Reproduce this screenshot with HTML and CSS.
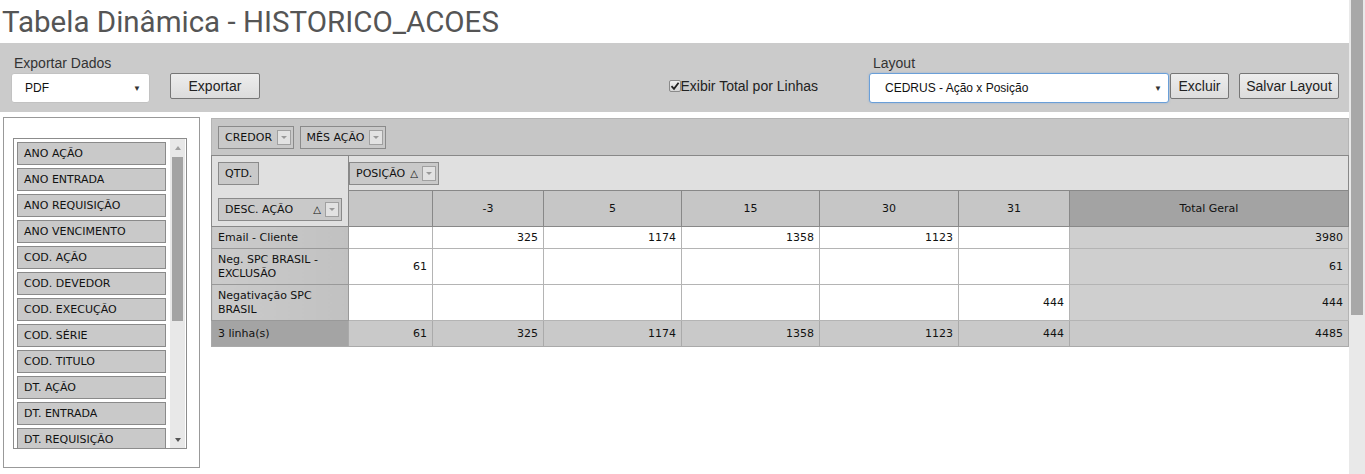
FILE: index.html
```html
<!DOCTYPE html>
<html lang="pt-BR">
<head>
    <meta charset="UTF-8">
    <meta name="viewport" content="width=device-width, initial-scale=1.0">
    <title>Tabela Dinâmica - HISTORICO_ACOES</title>
    <link rel="stylesheet" href="styles.css">
</head>
<body>
<div class="screen">
    <div class="page">
        <h1 class="title">Tabela Dinâmica - HISTORICO_ACOES</h1>

        <!-- Barra de exportação / layout -->
        <div class="toolbar">
            <div class="field">
                <span class="field-label">Exportar Dados</span>
                <div class="select select-export"><span>PDF</span><span class="caret">&#9660;</span></div>
            </div>
            <button class="btn btn-export">Exportar</button>

            <label class="check">
                <span class="check-box">
                    <svg width="10" height="10" viewBox="0 0 10 10"><path d="M1.5 5.2 L4 7.8 L8.6 1.8" fill="none" stroke="#222" stroke-width="1.8"/></svg>
                </span>Exibir Total por Linhas
            </label>
            <div class="field field-layout">
                <span class="field-label">Layout</span>
                <div class="select select-layout"><span>CEDRUS - Ação x Posição</span><span class="caret">&#9660;</span></div>
            </div>
            <button class="btn btn-delete">Excluir</button>
            <button class="btn btn-save">Salvar Layout</button>
        </div>

        <div class="content">
            <!-- Lista de campos disponíveis -->
            <div class="fields-panel">
                <div class="field-list">
                    <div class="items">
                        <div class="item">ANO AÇÃO</div>
                        <div class="item">ANO ENTRADA</div>
                        <div class="item">ANO REQUISIÇÃO</div>
                        <div class="item">ANO VENCIMENTO</div>
                        <div class="item">COD. AÇÃO</div>
                        <div class="item">COD. DEVEDOR</div>
                        <div class="item">COD. EXECUÇÃO</div>
                        <div class="item">COD. SÉRIE</div>
                        <div class="item">COD. TITULO</div>
                        <div class="item">DT. AÇÃO</div>
                        <div class="item">DT. ENTRADA</div>
                        <div class="item">DT. REQUISIÇÃO</div>
                    </div>
                    <div class="mini-scroll">
                        <span class="mini-arrow up"></span>
                        <div class="mini-track"><div class="mini-thumb"></div></div>
                        <span class="mini-arrow down"></span>
                    </div>
                </div>
            </div>

            <!-- Tabela dinâmica -->
            <div class="pivot-wrap">
                <table class="pivot">
                    <colgroup>
                        <col class="c-row">
                        <col class="c-84">
                        <col class="c-111">
                        <col class="c-138">
                        <col class="c-138">
                        <col class="c-139">
                        <col class="c-111">
                        <col>
                    </colgroup>
                    <tr class="filter-row">
                        <td colspan="8" class="filter-cell">
                            <span class="pfield">CREDOR<span class="drop"></span></span>
                            <span class="pfield">MÊS AÇÃO<span class="drop"></span></span>
                        </td>
                    </tr>
                    <tr class="col-field-row">
                        <td rowspan="2" class="corner">
                            <div class="corner-inner">
                                <span class="pfield pfield-plain">QTD.</span>
                                <span class="pfield pfield-wide">DESC. AÇÃO<span class="icons"><span class="sort">&#9651;</span><span class="drop"></span></span></span>
                            </div>
                        </td>
                        <td colspan="7" class="col-field-cell">
                            <span class="pfield">POSIÇÃO<span class="icons"><span class="sort">&#9651;</span><span class="drop"></span></span></span>
                        </td>
                    </tr>
                    <tr class="head-row">
                        <td class="colhead"></td>
                        <td class="colhead">-3</td>
                        <td class="colhead">5</td>
                        <td class="colhead">15</td>
                        <td class="colhead">30</td>
                        <td class="colhead">31</td>
                        <td class="colhead grand">Total Geral</td>
                    </tr>
                    <tr class="row-short">
                        <td class="rowhead">Email - Cliente</td>
                        <td class="num"></td>
                        <td class="num">325</td>
                        <td class="num">1174</td>
                        <td class="num">1358</td>
                        <td class="num">1123</td>
                        <td class="num"></td>
                        <td class="num total">3980</td>
                    </tr>
                    <tr class="row-tall">
                        <td class="rowhead">Neg. SPC BRASIL - EXCLUSÃO</td>
                        <td class="num">61</td>
                        <td class="num"></td>
                        <td class="num"></td>
                        <td class="num"></td>
                        <td class="num"></td>
                        <td class="num"></td>
                        <td class="num total">61</td>
                    </tr>
                    <tr class="row-tall">
                        <td class="rowhead">Negativação SPC BRASIL</td>
                        <td class="num"></td>
                        <td class="num"></td>
                        <td class="num"></td>
                        <td class="num"></td>
                        <td class="num"></td>
                        <td class="num">444</td>
                        <td class="num total">444</td>
                    </tr>
                    <tr class="sum-row">
                        <td class="sum-label">3 linha(s)</td>
                        <td class="num">61</td>
                        <td class="num">325</td>
                        <td class="num">1174</td>
                        <td class="num">1358</td>
                        <td class="num">1123</td>
                        <td class="num">444</td>
                        <td class="num">4485</td>
                    </tr>
                </table>
            </div>
        </div>
    </div>
    <div class="vscroll"><div class="vthumb"></div></div>
</div>
</body>
</html>
```

FILE: styles.css
```css
* {
    box-sizing: border-box;
}
body {
    margin: 0;
    background: #fff;
    font-family: "Liberation Sans", Arial, sans-serif;
}
.screen {
    display: grid;
    grid-template-columns: 1349px 16px;
    height: 474px;
    overflow: hidden;
}
.page {
    min-width: 0;
    overflow: hidden;
}
.title {
    margin: 0;
    height: 43px;
    padding: 1px 0 0 2px;
    font: 400 29.5px/42px Roboto, sans-serif;
    color: #555;
}

/* toolbar */
.toolbar {
    display: flex;
    align-items: flex-end;
    height: 69px;
    padding: 12px 10px 9px 11px;
    background: #cbcbcb;
}
.field {
    display: flex;
    flex-direction: column;
}
.field-label {
    font-size: 14px;
    line-height: 16px;
    color: #333;
    padding-left: 3px;
    margin-bottom: 2px;
}
.field-layout .field-label {
    padding-left: 4px;
}
.select {
    display: flex;
    align-items: center;
    justify-content: space-between;
    height: 30px;
    background: #fff;
    border: 1px solid #c2c2c2;
    border-radius: 3px;
    font-size: 12px;
    color: #111;
}
.select-export {
    width: 139px;
    padding: 0 8px 0 13px;
}
.select-layout {
    width: 300px;
    padding: 0 6px 0 15px;
    border-color: #6a9fd8;
    box-shadow: 0 0 2px rgba(90, 150, 220, 0.5);
}
.caret {
    font-size: 8px;
    color: #333;
}
.btn {
    height: 26px;
    margin-bottom: 4px;
    padding: 0;
    border: 1px solid #767676;
    border-radius: 2px;
    background: linear-gradient(#ededed, #dcdcdc);
    font: 14px "Liberation Sans", Arial, sans-serif;
    color: #222;
}
.btn-export {
    width: 90px;
    margin-left: 20px;
}
.btn-delete {
    width: 59px;
    margin-left: 1px;
}
.btn-save {
    width: 100px;
    margin-left: 10px;
}
.check {
    display: flex;
    align-items: center;
    margin-left: auto;
    margin-right: 51px;
    margin-bottom: 9px;
    font-size: 14px;
    line-height: 16px;
    color: #222;
}
.check-box {
    display: flex;
    align-items: center;
    justify-content: center;
    width: 12px;
    height: 12px;
    border: 1px solid #8a8a8a;
    border-radius: 2px;
    background: linear-gradient(#f0f0f0, #d6d6d6);
}

/* content */
.content {
    display: flex;
    align-items: flex-start;
    margin-top: 5px;
}
.fields-panel {
    flex-shrink: 0;
    width: 197px;
    height: 351px;
    margin-left: 3px;
    padding: 20px 0 0 9px;
    border: 1px solid #999;
}
.field-list {
    display: flex;
    width: 174px;
    height: 311px;
    border: 1px solid #8c8c8c;
    overflow: hidden;
}
.items {
    padding: 3px 0 0 3px;
    width: 155px;
}
.item {
    width: 149px;
    height: 23px;
    margin-bottom: 3px;
    padding-left: 6px;
    border: 1px solid #8a8a8a;
    background: #c9c9c9;
    font: 11px/21px "DejaVu Sans", Verdana, sans-serif;
    color: #111;
    white-space: nowrap;
}
.mini-scroll {
    display: flex;
    flex-direction: column;
    width: 15px;
    margin-left: 1px;
    background: #e8e8e8;
}
.mini-arrow {
    height: 17px;
    display: flex;
    align-items: center;
    justify-content: center;
}
.mini-arrow::after {
    content: "";
    border-left: 3px solid transparent;
    border-right: 3px solid transparent;
}
.mini-arrow.up::after {
    border-bottom: 4px solid #a0a0a0;
}
.mini-arrow.down::after {
    border-top: 4px solid #555;
}
.mini-track {
    flex: 1;
    padding: 1px 2px 0 2px;
}
.mini-thumb {
    height: 164px;
    background: #a3a3a3;
}

/* pivot */
.pivot-wrap {
    width: 1138px;
    flex-shrink: 0;
    margin: 1px 0 0 11px;
}
.pivot {
    width: 100%;
    border-collapse: collapse;
    table-layout: fixed;
    border: 1px solid #888;
    font: 11px "DejaVu Sans", Verdana, sans-serif;
    color: #111;
}
.c-row { width: 137px; }
.c-84 { width: 84px; }
.c-111 { width: 111px; }
.c-138 { width: 138px; }
.c-139 { width: 139px; }
.pivot td {
    padding: 0 5px;
    border: 1px solid #b4b4b4;
    vertical-align: middle;
}
.filter-row {
    height: 37px;
}
.filter-cell {
    background: #c6c6c6;
    border-bottom: 1px solid #888 !important;
    padding-left: 6px !important;
}
.pfield {
    display: inline-flex;
    align-items: center;
    justify-content: space-between;
    gap: 5px;
    height: 23px;
    padding: 0 2px 0 6px;
    border: 1px solid #8a8a8a;
    background: #c9c9c9;
    vertical-align: middle;
    white-space: nowrap;
}
.filter-cell .pfield + .pfield {
    margin-left: 2px;
}
.pfield-plain {
    padding-right: 6px;
}
.pfield-wide {
    width: 124px;
}
.icons {
    display: flex;
    align-items: center;
    gap: 4px;
}
.sort {
    font-size: 10px;
}
.drop {
    display: flex;
    align-items: center;
    justify-content: center;
    width: 14px;
    height: 15px;
    border: 1px solid #a0a0a0;
    background: #e2e2e2;
}
.drop::after {
    content: "";
    border-left: 3px solid transparent;
    border-right: 3px solid transparent;
    border-top: 3px solid #999;
}
.col-field-row {
    height: 35px;
}
.corner {
    background: #e0e0e0;
    border-color: #888 !important;
    padding: 0 !important;
}
.corner-inner {
    display: flex;
    flex-direction: column;
    align-items: flex-start;
    gap: 13px;
    padding: 0 6px;
}
.col-field-cell {
    background: #e0e0e0;
    padding: 0 !important;
    border-color: #888 !important;
}
.head-row {
    height: 36px;
}
.colhead {
    background: #c6c6c6;
    border-color: #888 !important;
    text-align: center;
}
.colhead.grand {
    background: #a3a3a3;
}
.row-short {
    height: 22px;
}
.row-tall {
    height: 36px;
}
.rowhead {
    background: linear-gradient(90deg, #cbcbcb, #c1c1c1);
    border-color: #999 !important;
    padding-left: 6px !important;
    line-height: 14px;
}
.num {
    text-align: right;
    background: #fff;
}
.num.total {
    background: #cfcfcf;
}
.sum-row {
    height: 26px;
}
.sum-row td {
    background: #c9c9c9;
    border-color: #aaa;
}
.sum-row .sum-label {
    background: #a4a4a4;
    padding-left: 6px;
}

/* page scrollbar */
.vscroll {
    background: #e9e9e9;
    padding: 0 2px;
}
.vthumb {
    height: 315px;
    background: #a8a8a8;
}
```
